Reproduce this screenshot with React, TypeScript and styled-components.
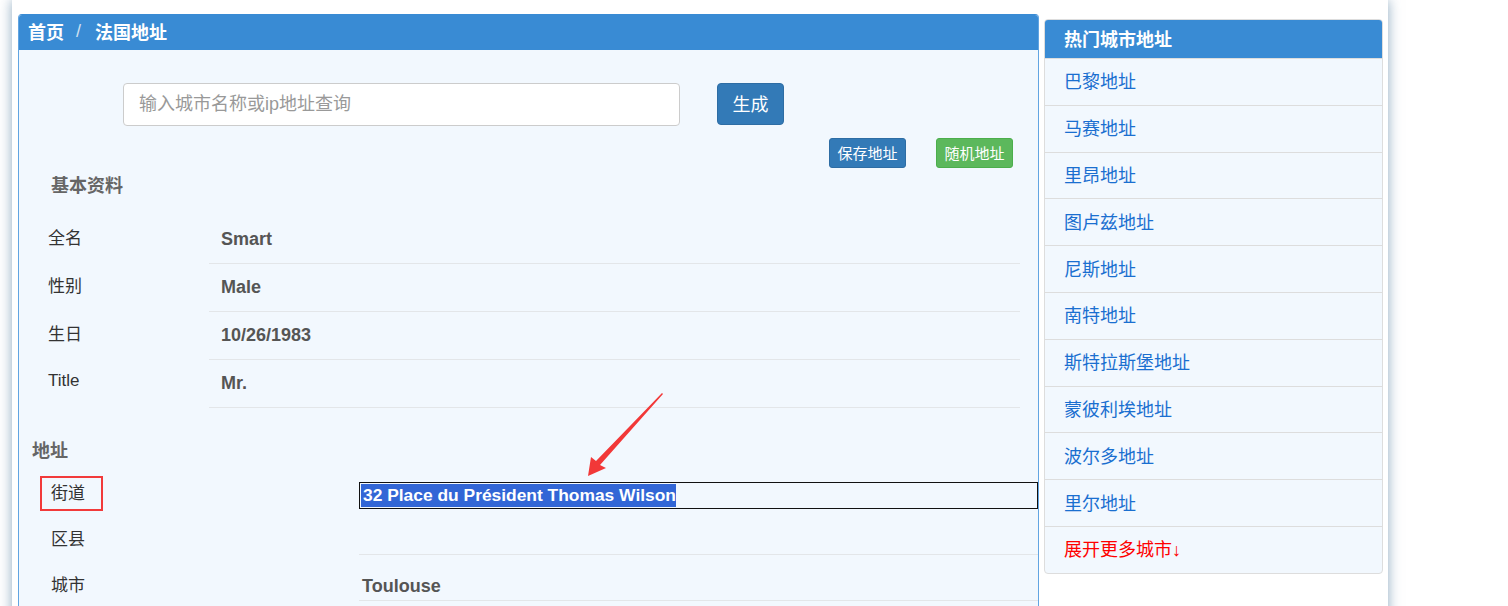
import React from "react";
import styled, { createGlobalStyle } from "styled-components";

const GlobalStyle = createGlobalStyle`
  html, body {
    margin: 0;
    padding: 0;
    background: #ffffff;
    overflow: hidden;
  }
  body {
    font-family: "Liberation Sans", "Noto Sans CJK SC", sans-serif;
    color: #333;
  }
  * { box-sizing: border-box; }
`;

const Page = styled.div`
  position: relative;
  width: 1376px;
  height: 660px;
  margin-left: 12px;
  background: #ffffff;
  box-shadow: 0 0 12px rgba(50, 100, 140, 0.55);
  display: flex;
  align-items: flex-start;
  gap: 5px;
  padding: 14px 5px 0 6px;
`;

const MainPanel = styled.section`
  width: 1021px;
  min-height: 660px;
  border: 1px solid #62a5e2;
  border-top-color: #398bd4;
  border-radius: 4px 4px 0 0;
  background: #f2f8fe;
  overflow: hidden;
`;

const PanelHeader = styled.div`
  height: 35px;
  background: #398bd4;
  display: flex;
  align-items: center;
  padding: 0 9px 3px;
  color: #ffffff;
  font-size: 18px;
  font-weight: 700;
`;

const Crumb = styled.span`
  color: #ffffff;
  font-weight: 700;
`;

const CrumbSep = styled.span`
  color: #cfe0f0;
  font-weight: 400;
  margin: 0 14px 0 12px;
`;

const SearchRow = styled.div`
  display: flex;
  align-items: flex-start;
  gap: 37px;
  margin-top: 33px;
  padding-left: 104px;
`;

const SearchInput = styled.input`
  width: 557px;
  height: 43px;
  border: 1px solid #cccccc;
  border-radius: 4px;
  background: #ffffff;
  padding: 0 15px;
  font-family: "Liberation Sans", "Noto Sans CJK SC", sans-serif;
  font-size: 18px;
  color: #555;
  outline: none;
  &::placeholder {
    color: #999999;
  }
`;

const GenerateButton = styled.button`
  width: 67px;
  height: 42px;
  background: #337ab7;
  border: 1px solid #2e6da4;
  border-radius: 4px;
  color: #ffffff;
  font-family: "Liberation Sans", "Noto Sans CJK SC", sans-serif;
  font-size: 18px;
  padding: 0 0 2px;
`;

const ActionRow = styled.div`
  display: flex;
  justify-content: flex-end;
  gap: 30px;
  margin-top: 12px;
  padding-right: 25px;
`;

const SmallButton = styled.button<{ $tone: "primary" | "success" }>`
  width: 77px;
  height: 30px;
  padding: 0 0 2px;
  border-radius: 3px;
  border: 1px solid ${(p) => (p.$tone === "primary" ? "#2e6da4" : "#4cae4c")};
  background: ${(p) => (p.$tone === "primary" ? "#337ab7" : "#5cb85c")};
  color: #ffffff;
  font-family: "Liberation Sans", "Noto Sans CJK SC", sans-serif;
  font-size: 15px;
`;

const SectionTitle = styled.h3<{ $indent: number; $top: number }>`
  margin: ${(p) => p.$top}px 0 0 0;
  padding-left: ${(p) => p.$indent}px;
  font-size: 18px;
  line-height: 20px;
  font-weight: 700;
  color: #666666;
`;

const InfoTable = styled.div`
  margin: 20px 0 0 19px;
  width: 982px;
  display: flex;
  flex-direction: column;
`;

const InfoRow = styled.div`
  display: grid;
  grid-template-columns: 171px 1fr;
  height: 48px;
`;

const InfoLabel = styled.div`
  display: flex;
  align-items: center;
  padding-left: 10px;
  padding-bottom: 7px;
  font-size: 17px;
  color: #333333;
`;

const InfoValue = styled.div`
  display: flex;
  align-items: center;
  padding-left: 12px;
  border-bottom: 1px solid #e3e6e9;
  font-size: 18px;
  font-weight: 700;
  color: #555555;
`;

const AddressTable = styled.div`
  margin-top: 2px;
  display: flex;
  flex-direction: column;
`;

const AddressRow = styled.div`
  display: grid;
  grid-template-columns: 340px 1fr;
  height: 46px;
`;

const AddressLabelCell = styled.div`
  display: flex;
  align-items: flex-start;
  padding-top: 14px;
`;

const AddressLabel = styled.span<{ $marked?: boolean }>`
  display: inline-block;
  font-size: 17px;
  line-height: 31px;
  color: #333333;
  margin-left: ${(p) => (p.$marked ? "21px" : "32px")};
  margin-top: ${(p) => (p.$marked ? "-1px" : "1px")};
  padding: ${(p) => (p.$marked ? "0 16px 0 9px" : "0")};
  border: ${(p) => (p.$marked ? "2px solid #f23a3a" : "none")};
`;

const AddressValue = styled.div<{ $ruled?: boolean }>`
  display: flex;
  align-items: center;
  padding-left: 3px;
  padding-top: 18px;
  border-bottom: ${(p) => (p.$ruled ? "1px solid #e3e6e9" : "none")};
  font-size: 18px;
  font-weight: 700;
  color: #555555;
`;

const SelectedBox = styled.div`
  margin-top: 19px;
  height: 27px;
  border: 1px solid #111111;
  display: flex;
  align-items: center;
  padding-left: 1px;
`;

const Selection = styled.span`
  background: #3266d6;
  color: #ffffff;
  font-size: 17.4px;
  font-weight: 700;
  line-height: 23px;
  padding-left: 2px;
`;

const Sidebar = styled.aside`
  margin-top: 5px;
  width: 339px;
  border: 1px solid #dddddd;
  border-radius: 4px;
  background: #f2f8fe;
  overflow: hidden;
`;

const SidebarHeader = styled.div`
  height: 38px;
  background: #398bd4;
  display: flex;
  align-items: center;
  padding: 0 0 2px 19px;
  color: #ffffff;
  font-size: 18px;
  font-weight: 700;
`;

const CityItem = styled.a<{ $accent?: boolean }>`
  display: flex;
  align-items: center;
  height: 46.8px;
  padding: 0 0 3px 19px;
  border-top: 1px solid #dddddd;
  font-size: 18px;
  color: ${(p) => (p.$accent ? "#ff0000" : "#1a6fd0")};
  text-decoration: none;
`;

const ArrowMark = styled.svg`
  position: absolute;
  left: 563px;
  top: 388px;
  width: 95px;
  height: 92px;
  pointer-events: none;
`;

const basicInfo: [string, string][] = [
  ["全名", "Smart"],
  ["性别", "Male"],
  ["生日", "10/26/1983"],
  ["Title", "Mr."],
];

const cities = [
  "巴黎地址",
  "马赛地址",
  "里昂地址",
  "图卢兹地址",
  "尼斯地址",
  "南特地址",
  "斯特拉斯堡地址",
  "蒙彼利埃地址",
  "波尔多地址",
  "里尔地址",
];

export default function App() {
  return (
    <>
      <GlobalStyle />
      <Page>
        <MainPanel>
          <PanelHeader>
            <Crumb>首页</Crumb>
            <CrumbSep>/</CrumbSep>
            <Crumb>法国地址</Crumb>
          </PanelHeader>

          <SearchRow>
            <SearchInput placeholder="输入城市名称或ip地址查询" />
            <GenerateButton>生成</GenerateButton>
          </SearchRow>

          <ActionRow>
            <SmallButton $tone="primary">保存地址</SmallButton>
            <SmallButton $tone="success">随机地址</SmallButton>
          </ActionRow>

          <SectionTitle $indent={32} $top={8}>基本资料</SectionTitle>

          <InfoTable>
            {basicInfo.map(([label, value]) => (
              <InfoRow key={label}>
                <InfoLabel>{label}</InfoLabel>
                <InfoValue>{value}</InfoValue>
              </InfoRow>
            ))}
          </InfoTable>

          <SectionTitle $indent={13} $top={33}>地址</SectionTitle>

          <AddressTable>
            <AddressRow>
              <AddressLabelCell>
                <AddressLabel $marked>街道</AddressLabel>
              </AddressLabelCell>
              <div>
                <SelectedBox>
                  <Selection>32 Place du Président Thomas Wilson</Selection>
                </SelectedBox>
              </div>
            </AddressRow>
            <AddressRow>
              <AddressLabelCell>
                <AddressLabel>区县</AddressLabel>
              </AddressLabelCell>
              <AddressValue $ruled />
            </AddressRow>
            <AddressRow>
              <AddressLabelCell>
                <AddressLabel>城市</AddressLabel>
              </AddressLabelCell>
              <AddressValue $ruled>Toulouse</AddressValue>
            </AddressRow>
          </AddressTable>
        </MainPanel>

        <Sidebar>
          <SidebarHeader>热门城市地址</SidebarHeader>
          {cities.map((c) => (
            <CityItem key={c} href="#">
              {c}
            </CityItem>
          ))}
          <CityItem href="#" $accent>
            展开更多城市↓
          </CityItem>
        </Sidebar>

        <ArrowMark viewBox="0 0 95 92">
          <polygon
            points="87,5 88,6 25,77 31,80 13,88 16,69 21,73"
            fill="#f23838"
          />
        </ArrowMark>
      </Page>
    </>
  );
}
